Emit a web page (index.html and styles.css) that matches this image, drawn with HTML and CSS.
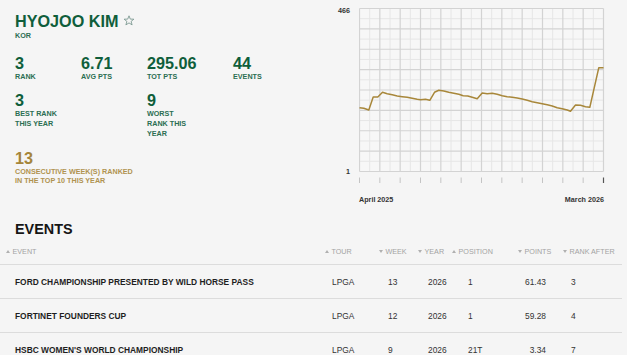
FILE: index.html
```html
<!DOCTYPE html>
<html lang="en">

<head>
    <meta charset="UTF-8">
    <meta name="viewport" content="width=device-width, initial-scale=1.0">
    <title>Hyojoo Kim - Ranking</title>
    <link rel="stylesheet" href="styles.css">
</head>

<body>
    <div class="profile">
        <div class="player">
            <h1 class="player-name">HYOJOO KIM
                <svg class="star" width="12" height="11" viewBox="0 0 12 11">
                    <path d="M6 0.8 L7.3 4.1 L10.9 4.2 L8.1 6.4 L9.1 9.9 L6 7.9 L2.9 9.9 L3.9 6.4 L1.1 4.2 L4.7 4.1 Z" fill="none" stroke="#7d9a92" stroke-width="0.9" stroke-linejoin="round"/>
                </svg>
            </h1>
            <div class="country">KOR</div>

            <div class="stats">
                <!-- First Row -->
                <div class="stat">
                    <div class="stat-value">3</div>
                    <div class="stat-label">RANK</div>
                </div>
                <div class="stat">
                    <div class="stat-value">6.71</div>
                    <div class="stat-label">AVG PTS</div>
                </div>
                <div class="stat">
                    <div class="stat-value">295.06</div>
                    <div class="stat-label">TOT PTS</div>
                </div>
                <div class="stat">
                    <div class="stat-value">44</div>
                    <div class="stat-label">EVENTS</div>
                </div>

                <!-- Second Row -->
                <div class="stat best">
                    <div class="stat-value">3</div>
                    <div class="stat-label">BEST RANK THIS YEAR</div>
                </div>
                <div class="stat worst">
                    <div class="stat-value">9</div>
                    <div class="stat-label">WORST RANK THIS YEAR</div>
                </div>

                <!-- Third Row -->
                <div class="stat streak">
                    <div class="stat-value">13</div>
                    <div class="stat-label">CONSECUTIVE WEEK(S) RANKED IN THE TOP 10 THIS YEAR</div>
                </div>
            </div>
        </div>

        <div class="chart">
            <div class="chart-body">
                <div class="y-axis">
                    <span class="y-max">466</span>
                    <span class="y-min">1</span>
                </div>
                <svg class="plot" width="246" height="176" viewBox="0 0 246 176">
                    <rect x="0.5" y="0.5" width="244" height="163" fill="#f7f7f7"/>
                    <!-- minor grid -->
                    <path d="M10.67 0.5V163.5M31 0.5V163.5M51.33 0.5V163.5M71.67 0.5V163.5M92 0.5V163.5M112.33 0.5V163.5M132.67 0.5V163.5M153 0.5V163.5M173.33 0.5V163.5M193.67 0.5V163.5M214 0.5V163.5M234.33 0.5V163.5
                             M0.5 10.69H244.5M0.5 31.06H244.5M0.5 51.44H244.5M0.5 71.81H244.5M0.5 92.19H244.5M0.5 112.56H244.5M0.5 132.94H244.5M0.5 153.31H244.5"
                          stroke="#e6e6e6" stroke-width="1" fill="none"/>
                    <!-- major grid -->
                    <path d="M0.5 0.5V163.5M20.83 0.5V163.5M41.17 0.5V163.5M61.5 0.5V163.5M81.83 0.5V163.5M102.17 0.5V163.5M122.5 0.5V163.5M142.83 0.5V163.5M163.17 0.5V163.5M183.5 0.5V163.5M203.83 0.5V163.5M224.17 0.5V163.5M244.5 0.5V163.5
                             M0.5 0.5H244.5M0.5 20.88H244.5M0.5 41.25H244.5M0.5 61.63H244.5M0.5 82H244.5M0.5 102.38H244.5M0.5 122.75H244.5M0.5 143.13H244.5M0.5 163.5H244.5"
                          stroke="#d3d3d3" stroke-width="1.2" fill="none"/>
                    <!-- ticks -->
                    <path d="M0.5 169.5V175M20.83 169.5V175M41.17 169.5V175M61.5 169.5V175M81.83 169.5V175M102.17 169.5V175M122.5 169.5V175M142.83 169.5V175M163.17 169.5V175M183.5 169.5V175M203.83 169.5V175M224.17 169.5V175"
                          stroke="#c4c4c4" stroke-width="1" fill="none"/>
                    <path d="M244.5 169.5V175" stroke="#555" stroke-width="1.2"/>
                    <!-- rank line -->
                    <path d="M0.5 99.7L4.8 100.3L9.8 102L14.2 89L18.8 89L23.5 84.3L28.2 85.7L33.2 86.7L38.2 88L43.2 88.7L48.2 89.3L53.2 90.3L58.2 91.3L61.5 91.7L66.5 91.3L70.8 92.3L75.5 84.3L79.8 82.3L84.8 83L89.8 84.3L94.8 85.3L99.8 86.3L104.2 87.7L108.8 88L113.2 89.3L118.2 90.7L123.2 85L128.2 85.7L133.2 85.3L138.2 86.3L143.2 87.7L148.2 88.7L153.2 89.3L158.2 90L163.2 91L168.2 92.3L173.2 93.7L178.2 94.7L183.2 95.7L188.2 96.7L193.2 98L198.2 99.7L203.2 100.7L208.2 102L211.5 103.3L216.5 97L221.5 97.3L226.5 98.7L230.8 99.3L239.8 59.7L244.5 59.7"
                          stroke="#a8873a" stroke-width="1.5" fill="none" stroke-linejoin="round"/>
                </svg>
            </div>
            <div class="x-axis">
                <span>April 2025</span>
                <span>March 2026</span>
            </div>
        </div>
    </div>

    <section class="events">
        <h2>EVENTS</h2>
        <table class="events-table">
            <colgroup>
                <col class="col-event">
                <col class="col-tour">
                <col class="col-week">
                <col class="col-year">
                <col class="col-pos">
                <col class="col-points">
                <col class="col-after">
            </colgroup>
            <thead>
                <tr>
                    <th class="event"><span class="sort up"></span>EVENT</th>
                    <th><span class="sort up"></span>TOUR</th>
                    <th><span class="sort down"></span>WEEK</th>
                    <th><span class="sort down"></span>YEAR</th>
                    <th><span class="sort up"></span>POSITION</th>
                    <th><span class="sort down"></span>POINTS</th>
                    <th><span class="sort down"></span>RANK AFTER</th>
                </tr>
            </thead>
            <tbody>
                <tr>
                    <td class="event">FORD CHAMPIONSHIP PRESENTED BY WILD HORSE PASS</td>
                    <td class="tour">LPGA</td>
                    <td class="week">13</td>
                    <td class="year">2026</td>
                    <td class="pos">1</td>
                    <td class="points">61.43</td>
                    <td class="after">3</td>
                </tr>
                <tr>
                    <td class="event">FORTINET FOUNDERS CUP</td>
                    <td class="tour">LPGA</td>
                    <td class="week">12</td>
                    <td class="year">2026</td>
                    <td class="pos">1</td>
                    <td class="points">59.28</td>
                    <td class="after">4</td>
                </tr>
                <tr>
                    <td class="event">HSBC WOMEN'S WORLD CHAMPIONSHIP</td>
                    <td class="tour">LPGA</td>
                    <td class="week">9</td>
                    <td class="year">2026</td>
                    <td class="pos">21T</td>
                    <td class="points">3.34</td>
                    <td class="after">7</td>
                </tr>
            </tbody>
        </table>
    </section>
</body>

</html>
```

FILE: styles.css
```css
body {
    margin: 0;
    background: #f5f5f5;
    font-family: "Liberation Sans", Arial, sans-serif;
    color: #222;
}

.profile {
    display: flex;
    align-items: flex-start;
}

.player {
    box-sizing: border-box;
    width: 337px;
    padding: 11.5px 0 0 15px;
}

.player-name {
    margin: 0;
    font-size: 16.2px;
    line-height: 19px;
    font-weight: bold;
    color: #0f5e3b;
    display: flex;
    align-items: center;
    gap: 5px;
}

.star {
    margin-top: -1px;
}

.country {
    font-size: 7.2px;
    line-height: 10px;
    font-weight: bold;
    color: #2b6e52;
}

.stats {
    display: grid;
    grid-template-columns: 66px 66px 86px 66px;
    row-gap: 11.4px;
    margin-top: 14px;
    color: #0f5e3b;
}

.stat-value {
    font-size: 16.2px;
    line-height: 17px;
    font-weight: bold;
}

.stat-label {
    font-size: 7.2px;
    line-height: 9.6px;
    font-weight: bold;
    color: #2b6e52;
}

.best {
    grid-column: 1;
}

.worst {
    grid-column: 3;
}

.best .stat-label,
.worst .stat-label {
    max-width: 46px;
}

.streak {
    grid-column: 1 / span 4;
    color: #a5853a;
}

.streak .stat-label {
    max-width: 120px;
    color: #b09350;
}

/* chart */
.chart {
    width: 268px;
    padding-top: 8px;
}

.chart-body {
    display: flex;
}

.y-axis {
    box-sizing: border-box;
    width: 22px;
    padding: 0 9px 8px 0;
    display: flex;
    flex-direction: column;
    justify-content: space-between;
    align-items: flex-end;
    font-size: 7.2px;
    line-height: 8px;
    font-weight: bold;
    color: #333;
}

.y-max {
    margin-top: -1px;
}

.plot {
    display: block;
}

.x-axis {
    display: flex;
    justify-content: space-between;
    margin-top: 11.2px;
    padding: 0 1px 0 22px;
    font-size: 7.2px;
    line-height: 9px;
    font-weight: bold;
    color: #333;
}

/* events */
.events {
    margin-top: 17px;
}

.events h2 {
    margin: 0 0 0 15px;
    font-size: 14.4px;
    line-height: 17px;
    font-weight: bold;
    color: #151515;
}

.events-table {
    width: 622px;
    table-layout: fixed;
    border-collapse: collapse;
}

.col-event { width: 325px; }
.col-tour { width: 54px; }
.col-week { width: 39px; }
.col-year { width: 34px; }
.col-pos { width: 66px; }
.col-points { width: 45px; }
.col-after { width: 59px; }

.events-table th {
    padding: 8.5px 0;
    font-size: 7.2px;
    line-height: 9px;
    font-weight: normal;
    color: #a3a3a3;
    text-align: left;
    white-space: nowrap;
    border-bottom: 1px solid #dcdcdc;
}

.events-table th.event {
    padding-left: 6px;
}

.sort {
    display: inline-block;
    width: 0;
    height: 0;
    margin-right: 2.5px;
    vertical-align: 1px;
    border-left: 2px solid transparent;
    border-right: 2px solid transparent;
}

.sort.up {
    border-bottom: 3px solid #b0b0b0;
}

.sort.down {
    border-top: 3px solid #b0b0b0;
}

.events-table td {
    height: 33px;
    padding: 0;
    font-size: 8.4px;
    color: #333;
    vertical-align: middle;
    white-space: nowrap;
    border-bottom: 1px solid #dcdcdc;
}

.events-table td.event {
    padding-left: 15px;
    font-weight: bold;
    color: #1e1e1e;
}

.tour { padding-left: 7px !important; }
.week { padding-left: 9px !important; }
.year { padding-left: 10px !important; }
.pos { padding-left: 16px !important; }
.points { text-align: right; padding-right: 17px !important; }
.after { padding-left: 8px !important; }
```
